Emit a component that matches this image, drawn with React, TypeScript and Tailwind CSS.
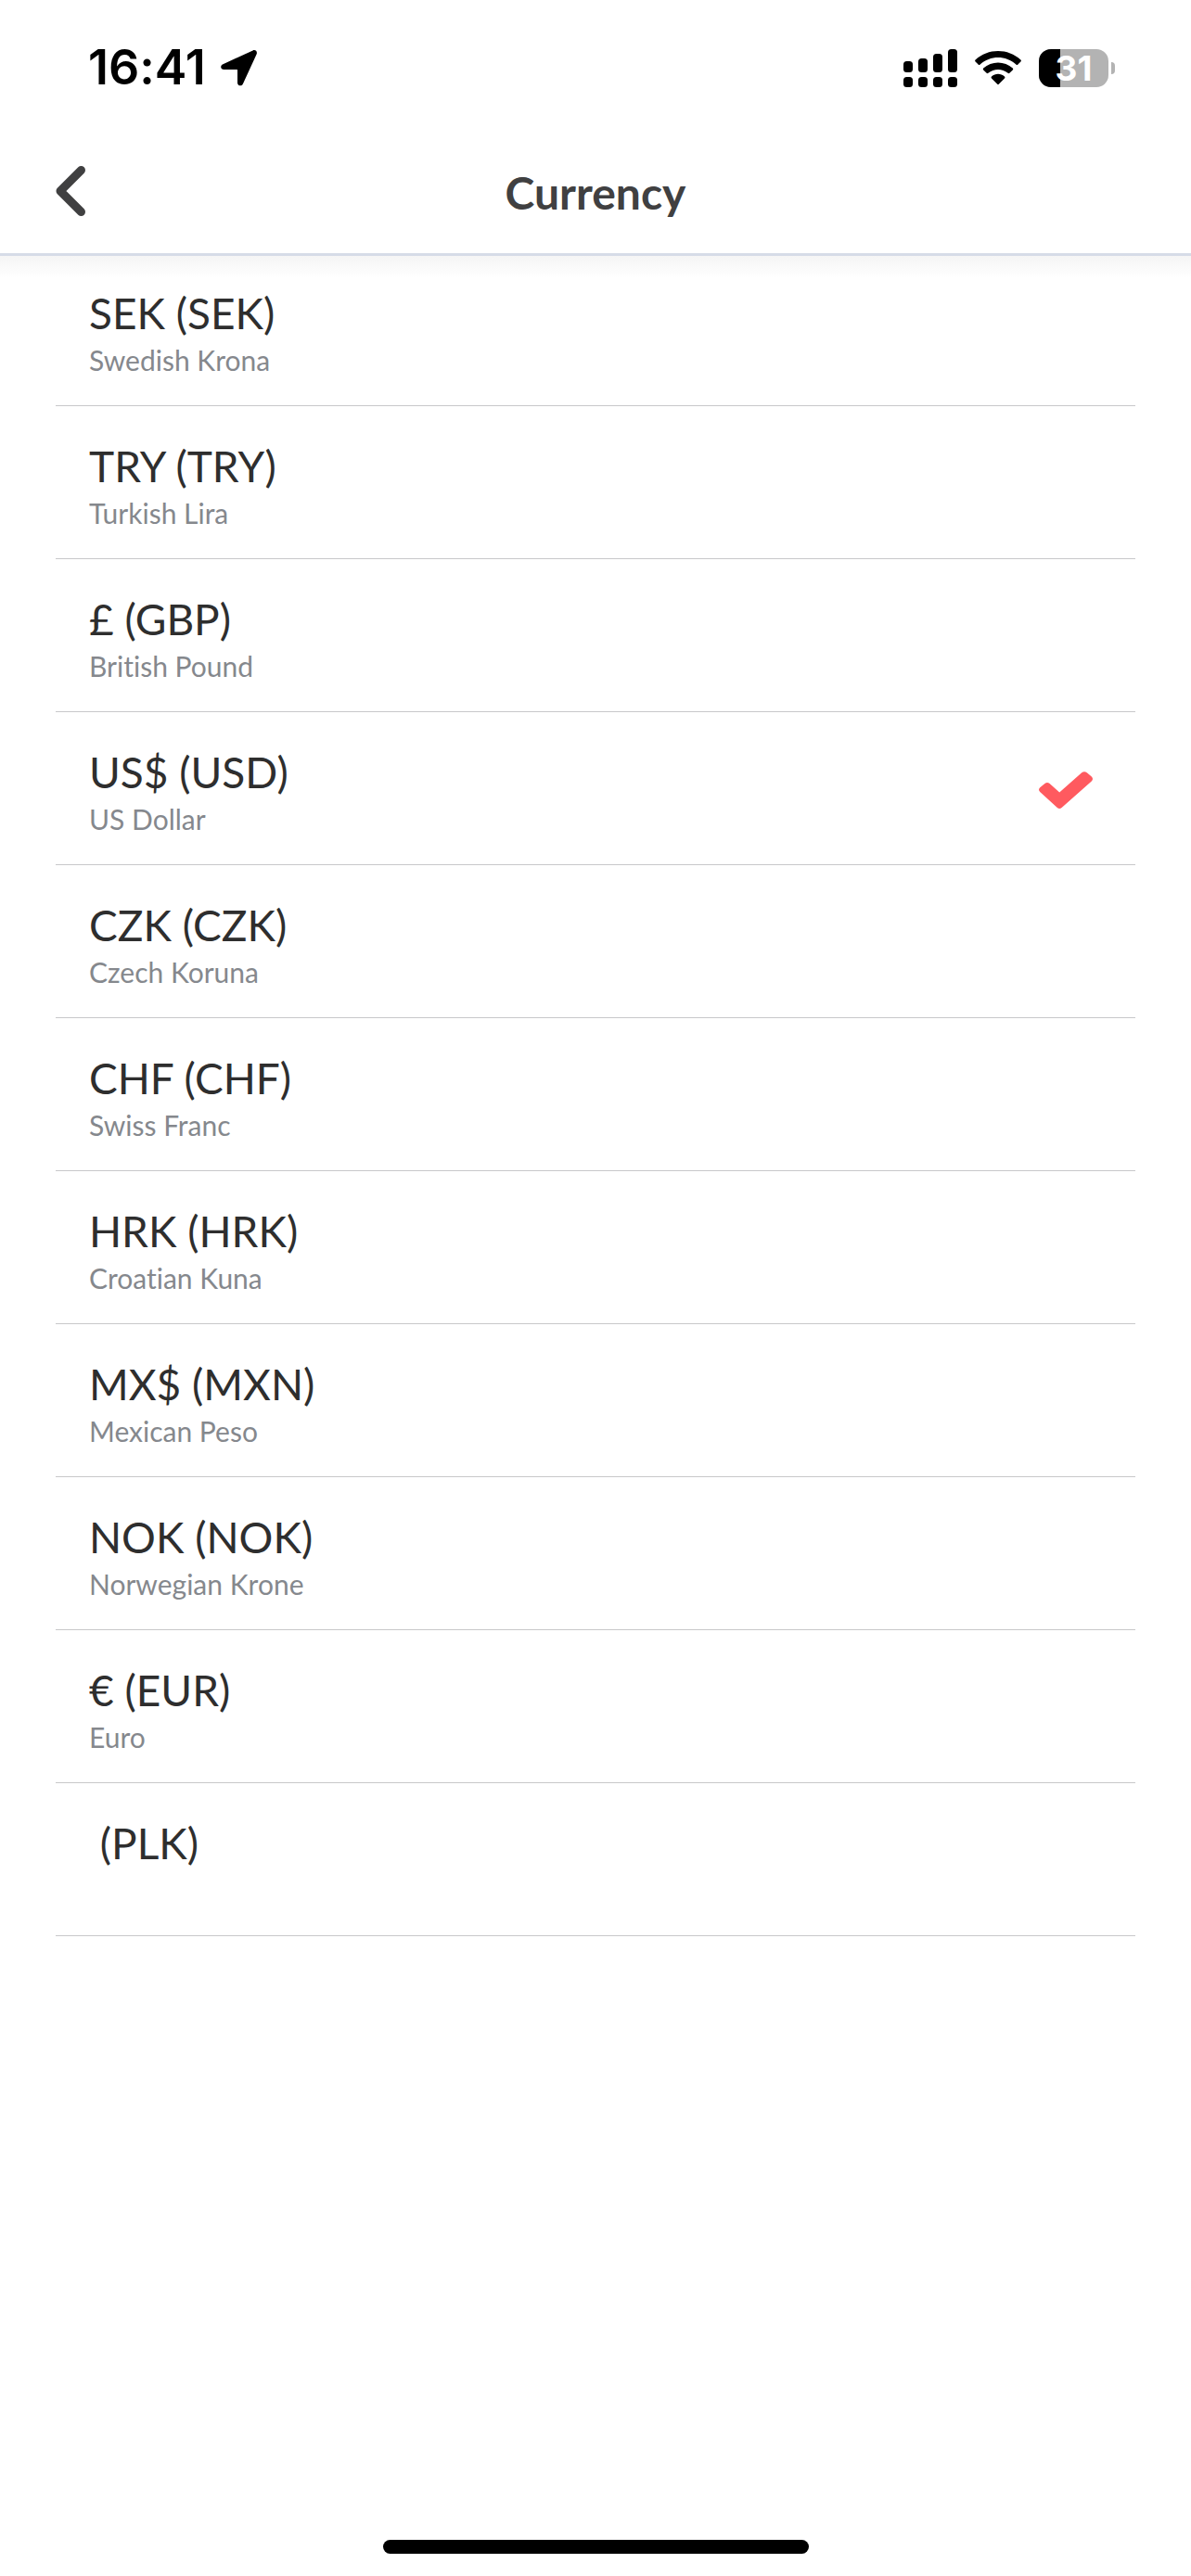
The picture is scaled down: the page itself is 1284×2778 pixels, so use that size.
import React, { useState } from 'react'

const currencies = [
  { code: 'SEK', symbol: 'SEK', name: 'Swedish Krona' },
  { code: 'TRY', symbol: 'TRY', name: 'Turkish Lira' },
  { code: 'GBP', symbol: '£', name: 'British Pound' },
  { code: 'USD', symbol: 'US$', name: 'US Dollar' },
  { code: 'CZK', symbol: 'CZK', name: 'Czech Koruna' },
  { code: 'CHF', symbol: 'CHF', name: 'Swiss Franc' },
  { code: 'HRK', symbol: 'HRK', name: 'Croatian Kuna' },
  { code: 'MXN', symbol: 'MX$', name: 'Mexican Peso' },
  { code: 'NOK', symbol: 'NOK', name: 'Norwegian Krone' },
  { code: 'EUR', symbol: '€', name: 'Euro' },
  { code: 'PLK', symbol: '', name: '' },
]

function LocationIcon() {
  return (
    <svg viewBox="0 0 39 39" className="w-[39px] h-[39px]" aria-hidden="true">
      <path
        d="M2.4 15.2 L34.6 .4 C37.4 -.8 39.8 1.6 38.6 4.6 L24 36.2 C22.6 39.6 18 38.8 18 35.2 V21.6 Q18 21 17.4 21 H3.6 C-.4 21 -1 16.8 2.4 15.2 Z"
        fill="black"
      />
    </svg>
  )
}

function SignalIcon() {
  return (
    <svg viewBox="0 0 58 41" className="w-[58px] h-[41px]" aria-hidden="true">
      <rect x="0" y="13" width="10" height="12" rx="3.5" />
      <rect x="16" y="10" width="10" height="15" rx="3.5" />
      <rect x="32" y="5" width="10" height="20" rx="3.5" />
      <rect x="48" y="0" width="10" height="25" rx="3.5" />
      <rect x="0" y="30" width="10" height="11" rx="3.5" />
      <rect x="16" y="30" width="10" height="11" rx="3.5" />
      <rect x="32" y="30" width="10" height="11" rx="3.5" />
      <rect x="48" y="30" width="10" height="11" rx="3.5" />
    </svg>
  )
}

function WifiIcon() {
  return (
    <svg viewBox="0 0 50 37" className="w-[50px] h-[37px]" aria-hidden="true">
      <path d="M.6 9.6 C14 -3.2 36 -3.2 49.4 9.6 Q50.4 10.6 49.4 11.6 L46.4 14.6 Q45.4 15.6 44.4 14.6 C33.6 4.6 16.4 4.6 5.6 14.6 Q4.6 15.6 3.6 14.6 L.6 11.6 Q-.4 10.6 .6 9.6 Z" />
      <path d="M9.2 18.4 C18 10.4 32 10.4 40.8 18.4 Q41.8 19.4 40.8 20.4 L37.4 23.8 Q36.6 24.6 35.6 23.8 C29.6 18.6 20.4 18.6 14.4 23.8 Q13.4 24.6 12.6 23.8 L9.2 20.4 Q8.2 19.4 9.2 18.4 Z" />
      <path d="M18 27.4 C22 24 28 24 32 27.4 Q33 28.4 32 29.4 L26 35.6 Q25 37 24 35.6 L18 29.4 Q17 28.4 18 27.4 Z" />
    </svg>
  )
}

function Battery({ level }: { level: number }) {
  return (
    <div className="flex items-center gap-[3px]">
      <div className="relative flex items-center justify-center w-[75px] h-[41px] rounded-[13px] bg-[#b3b3b3]">
        <div
          className="absolute inset-y-0 left-0 rounded-l-[13px] bg-black"
          style={{ width: `${level}%` }}
        />
        <span className="relative font-['Inter',sans-serif] font-bold text-[37px] leading-[41px] text-white">
          {level}
        </span>
      </div>
      <div className="w-[4px] h-[13px] rounded-r-full bg-[#b3b3b3]" />
    </div>
  )
}

function StatusBar() {
  return (
    <div className="flex items-center justify-between h-[146px] pl-[95px] pr-[82px]">
      <div className="flex items-center gap-4">
        <span className="font-['Inter',sans-serif] font-semibold text-[52px] leading-[60px] text-black">
          16:41
        </span>
        <LocationIcon />
      </div>
      <div className="flex items-center gap-[19px]">
        <SignalIcon />
        <WifiIcon />
        <Battery level={31} />
      </div>
    </div>
  )
}

function Header() {
  return (
    <header className="relative z-10 bg-white shadow-[0_3px_0_#d6dce7]">
      <StatusBar />
      <div className="grid grid-cols-[1fr_auto_1fr] items-center h-[127px] px-[60px] pb-1">
        <button type="button" aria-label="Back" className="justify-self-start">
          <svg viewBox="0 0 32 62" className="w-8 h-[62px]" aria-hidden="true">
            <path
              d="M27.5 6.5 L5 29 L27.5 51.5"
              fill="none"
              stroke="#404041"
              strokeWidth="9"
              strokeLinecap="round"
              strokeLinejoin="round"
            />
          </svg>
        </button>
        <h1 className="font-bold text-[48px] leading-[56px] text-[#404041]">Currency</h1>
      </div>
      <div className="absolute inset-x-0 top-full mt-[3px] h-6 bg-linear-to-b from-[#f5f5f5] to-white" />
    </header>
  )
}

function CheckIcon() {
  return (
    <svg viewBox="0 0 58 40" className="w-[58px] h-10" aria-hidden="true">
      <path
        d="M1.2 17.2 L6.4 12.9 Q9 11 11.6 12.9 L22.2 22.6 L46.2 1.2 Q49 -.8 51.8 1.2 L56.8 5.6 Q59.2 8 56.8 10.4 L24.6 39 Q22.2 40.8 19.8 39 L1.2 22 Q-1.2 19.6 1.2 17.2 Z"
        fill="#ff5a5f"
      />
    </svg>
  )
}

export default function App() {
  const [selected, setSelected] = useState('USD')

  return (
    <div className="flex flex-col min-h-screen bg-white font-['Lato',sans-serif] [font-variant-ligatures:none]">
      <Header />
      <main className="flex-1 px-[60px]">
        {currencies.map(({ code, symbol, name }) => (
          <label
            key={code}
            className="relative flex items-center justify-between h-[165px] pl-9 pr-[46px] pt-1 border-b border-[#c8c8ca]"
          >
            <input
              type="radio"
              name="currency"
              value={code}
              checked={selected === code}
              onChange={() => setSelected(code)}
              className="sr-only"
            />
            <span className="flex flex-col pt-1.5">
              <span className="text-[46px] leading-[56px] text-[#2e2e2e] whitespace-pre">
                {symbol} ({code})
              </span>
              <span className="h-11 text-[30px] leading-[44px] text-[#85888d]">{name}</span>
            </span>
            {selected === code && <CheckIcon />}
          </label>
        ))}
      </main>
      <div className="self-center w-[459px] h-[15px] mb-6 rounded-full bg-black" />
    </div>
  )
}
